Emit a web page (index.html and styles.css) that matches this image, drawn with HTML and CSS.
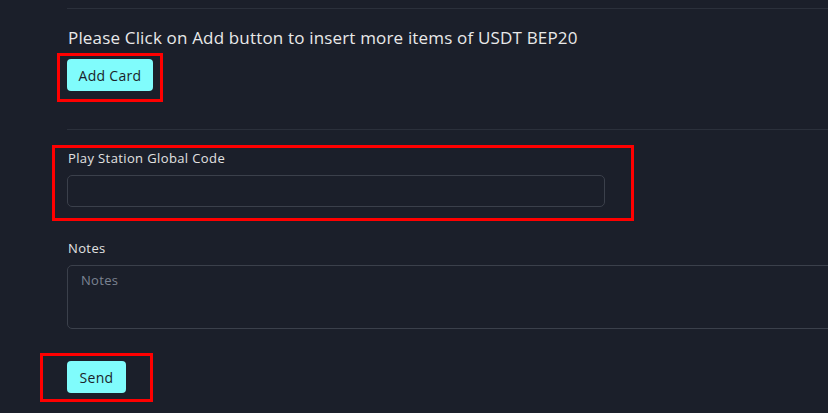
FILE: index.html
```html
<!DOCTYPE html>
<html lang="en">
<head>
<meta charset="utf-8">
<title>Add items</title>
<link rel="stylesheet" href="styles.css">
</head>
<body>
<div class="page">
  <div class="rule rule-top"></div>
  <p class="intro">Please Click on Add button to insert more items of USDT BEP20</p>
  <div class="mark mark-add"><button class="btn btn-add" type="button">Add Card</button></div>
  <div class="rule rule-mid"></div>
  <div class="field mark mark-code">
    <label class="label" for="code">Play Station Global Code</label>
    <input class="input" id="code" type="text">
  </div>
  <div class="field field-notes">
    <label class="label" for="notes">Notes</label>
    <textarea class="textarea" id="notes" placeholder="Notes"></textarea>
  </div>
  <div class="mark mark-send"><button class="btn btn-send" type="button">Send</button></div>
</div>
</body>
</html>
```

FILE: styles.css
```css
html, body {
  margin: 0;
  padding: 0;
  background: #1b1f2a;
  overflow: hidden;
}
body {
  width: 828px;
  height: 413px;
  font-family: "Open Sans", "Noto Sans", sans-serif;
  color: #e6e6e6;
}
.page {
  padding: 8px 0 0 67px;
  display: flex;
  flex-direction: column;
  align-items: flex-start;
}
.rule {
  align-self: stretch;
  height: 1px;
  background: #2b303b;
}
.intro {
  margin: 17px 0 0 1px;
  font-size: 17px;
  line-height: 24px;
  letter-spacing: 0.17px;
  color: #e9e9e9;
}
.mark {
  position: relative;
}
.mark::after {
  content: "";
  position: absolute;
  border: 3px solid #ff0000;
  pointer-events: none;
}
.mark-add {
  margin-top: 9px;
}
.mark-add::after {
  top: -6px;
  left: -10px;
  right: -10px;
  bottom: -11px;
}
.btn {
  height: 32px;
  border: none;
  border-radius: 4px;
  background: #80fcfc;
  color: #1b1f2a;
  font-family: "Open Sans", "Noto Sans", sans-serif;
  font-size: 14px;
  letter-spacing: 0.3px;
  padding: 0;
  white-space: nowrap;
  text-align: center;
  display: block;
}
.btn-add {
  width: 86px;
}
.btn-send {
  width: 59px;
}
.rule-mid {
  margin-top: 38px;
}
.field {
  display: flex;
  flex-direction: column;
  gap: 7px;
}
.label {
  font-size: 13px;
  line-height: 20px;
  letter-spacing: 0.38px;
  color: #e2e2e2;
  padding-left: 1px;
}
.mark-code {
  margin-top: 18px;
}
.mark-code::after {
  top: -3px;
  left: -15px;
  right: -29px;
  bottom: -14px;
}
.input {
  width: 538px;
  height: 32px;
  box-sizing: border-box;
  background: transparent;
  border: 1px solid #3b404b;
  border-radius: 5px;
  color: #e6e6e6;
  padding: 0 13px;
  font-family: "Open Sans", "Noto Sans", sans-serif;
  font-size: 13px;
}
.field-notes {
  margin-top: 31px;
}
.textarea {
  width: 800px;
  height: 64px;
  box-sizing: border-box;
  background: transparent;
  border: 1px solid #3b404b;
  border-radius: 5px;
  color: #e6e6e6;
  padding: 4px 13px;
  font-family: "Open Sans", "Noto Sans", sans-serif;
  font-size: 13px;
  line-height: 20px;
  letter-spacing: 0.3px;
  resize: none;
}
.textarea::placeholder {
  color: #7b8392;
  opacity: 1;
}
.mark-send {
  margin-top: 32px;
}
.mark-send::after {
  top: -8px;
  left: -27px;
  right: -27px;
  bottom: -9px;
}
```
